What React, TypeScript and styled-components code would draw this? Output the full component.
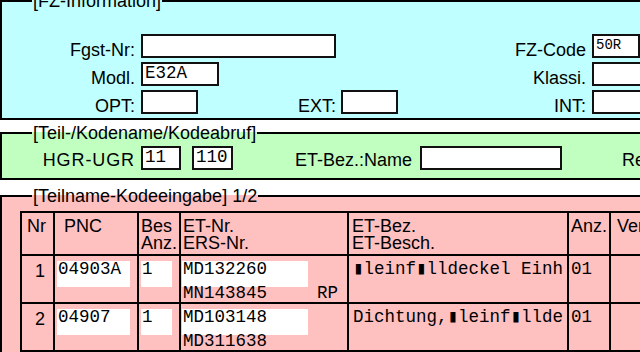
import React from 'react';
import styled, { createGlobalStyle } from 'styled-components';

const GlobalStyle = createGlobalStyle`
  html, body {
    margin: 0;
    padding: 0;
    background: #ffffff;
    overflow: hidden;
  }
  body {
    font-family: 'Liberation Sans', Arial, sans-serif;
    color: #000;
  }
`;

const Page = styled.div`
  width: 640px;
  height: 352px;
  overflow: hidden;
`;

const Inner = styled.div`
  width: 820px;
`;

const Section = styled.fieldset<{ $bg: string; $top: number }>`
  margin: ${(p) => p.$top}px 0 0 0;
  padding: 0;
  min-width: 0;
  border: 2px solid #000;
  background: ${(p) => p.$bg};
`;

const Legend = styled.legend`
  margin-left: 30px;
  padding: 0 1px;
  font-size: 18px;
  line-height: 18px;
  white-space: pre;
`;

/* FZ-Information block */
const InfoGrid = styled.div`
  display: grid;
  grid-template-columns: 139px 150px 50px 59px 192px 1fr;
  grid-auto-rows: 24px;
  row-gap: 4px;
  padding: 24px 0 4px;
`;

const Label = styled.span<{ $col: number; $pad?: number }>`
  grid-column: ${(p) => p.$col};
  align-self: end;
  justify-self: end;
  padding-right: ${(p) => p.$pad ?? 6}px;
  font-size: 18px;
  line-height: 18px;
  margin-bottom: -1px;
  white-space: nowrap;
`;

const Field = styled.div<{ $w: number; $col?: string; $size?: number }>`
  ${(p) => (p.$col ? `grid-column: ${p.$col};` : '')}
  box-sizing: border-box;
  width: ${(p) => p.$w}px;
  height: 24px;
  border: 2px solid #111;
  background: #fff;
  padding: 1px 0 0 2px;
  font-family: 'Liberation Mono', 'Courier New', monospace;
  font-size: ${(p) => p.$size ?? 17.5}px;
  line-height: 17px;
  white-space: pre;
`;

/* Teil-/Kodename block */
const CodeRow = styled.div`
  display: flex;
  align-items: flex-end;
  padding: 4px 0 8px;
`;

const RowLabel = styled.span<{ $w?: number; $ml?: number; $ls?: number }>`
  ${(p) => (p.$w ? `width: ${p.$w}px; text-align: right; padding-right: 6px; box-sizing: border-box;` : '')}
  margin-left: ${(p) => p.$ml ?? 0}px;
  letter-spacing: ${(p) => p.$ls ?? 0}px;
  font-size: 18px;
  line-height: 18px;
  margin-bottom: 1px;
  white-space: nowrap;
  flex-shrink: 0;
`;

const Spacer = styled.span<{ $w: number }>`
  width: ${(p) => p.$w}px;
  flex-shrink: 0;
`;

/* Teilname table */
const TableWrap = styled.div`
  padding: 6px 0 0 18px;
`;

const Table = styled.div`
  display: grid;
  grid-template-columns: 33px 84px 42px 168px 220px 42px 120px;
  grid-template-rows: 43px 48px 48px;
  border-left: 2px solid #000;
  border-top: 2px solid #000;
  width: max-content;
`;

const Cell = styled.div`
  border-right: 2px solid #000;
  border-bottom: 2px solid #000;
  overflow: hidden;
  white-space: pre;
`;

const HeadCell = styled(Cell)<{ $pl: number }>`
  padding: 5px 0 0 ${(p) => p.$pl}px;
  font-size: 18px;
  line-height: 17px;
`;

const NrCell = styled(Cell)`
  text-align: right;
  padding: 7px 8px 0 0;
  font-size: 18px;
  line-height: 17px;
`;

const BoxCell = styled(Cell)<{ $ml: number }>`
  padding: 5px 0 0 ${(p) => p.$ml}px;
`;

const MonoCell = styled(Cell)<{ $pl: number }>`
  padding: 5px 0 0 ${(p) => p.$pl}px;
  font-family: 'Liberation Mono', 'DejaVu Sans Mono', monospace;
  font-size: 17.5px;
  line-height: 17.5px;
`;

const Box = styled.div<{ $w: number }>`
  width: ${(p) => p.$w}px;
  height: 26px;
  background: #fff;
  padding-left: 1px;
  box-sizing: border-box;
  font-family: 'Liberation Mono', 'Courier New', monospace;
  font-size: 17.5px;
  line-height: 17.5px;
  white-space: pre;
`;

const SubLine = styled.div`
  display: flex;
  justify-content: space-between;
  padding: 0 9px 0 1px;
  margin-top: -2px;
  font-family: 'Liberation Mono', 'Courier New', monospace;
  font-size: 17.5px;
  line-height: 17.5px;
`;

type Row = { nr: string; pnc: string; bes: string; et: string; ers: string; tag: string; bez: string; anz: string };

const rows: Row[] = [
  { nr: '1', pnc: '04903A', bes: '1', et: 'MD132260', ers: 'MN143845', tag: 'RP', bez: '▮leinf▮lldeckel Einh', anz: '01' },
  { nr: '2', pnc: '04907', bes: '1', et: 'MD103148', ers: 'MD311638', tag: '', bez: 'Dichtung,▮leinf▮llde', anz: '01' },
];

const App: React.FC = () => {
  return (
    <Page>
      <GlobalStyle />
      <Inner>
        <Section $bg="#c0ffff" $top={-8}>
          <Legend>[FZ-Information]</Legend>
          <InfoGrid>
            <Label $col={1}>Fgst-Nr:</Label>
            <Field $w={195} $col="2 / span 2" />
            <Label $col={5}>FZ-Code</Label>
            <Field $w={48} $col="6" $size={14}>50R</Field>

            <Label $col={1}>Modl.</Label>
            <Field $w={78} $col="2">E32A</Field>
            <Label $col={5}>Klassi.</Label>
            <Field $w={52} $col="6" />

            <Label $col={1}>OPT:</Label>
            <Field $w={57} $col="2" />
            <Label $col={3} $pad={5}>EXT:</Label>
            <Field $w={57} $col="4" />
            <Label $col={5}>INT:</Label>
            <Field $w={52} $col="6" />
          </InfoGrid>
        </Section>

        <Section $bg="#c0ffc0" $top={4}>
          <Legend>[Teil-/Kodename/Kodeabruf]</Legend>
          <CodeRow>
            <RowLabel $w={139} $ls={0.9}>HGR-UGR</RowLabel>
            <Field $w={40}>11</Field>
            <Spacer $w={11} />
            <Field $w={41}>110</Field>
            <RowLabel $ml={62}>ET-Bez.:Name</RowLabel>
            <Spacer $w={8} />
            <Field $w={142} />
            <RowLabel $ml={60}>Rep.-Nr.</RowLabel>
          </CodeRow>
        </Section>

        <Section $bg="#ffc0c0" $top={7}>
          <Legend>[Teilname-Kodeeingabe] 1/2</Legend>
          <TableWrap>
            <Table>
              <HeadCell $pl={5}>Nr</HeadCell>
              <HeadCell $pl={9}>PNC</HeadCell>
              <HeadCell $pl={2}>{'Bes\nAnz.'}</HeadCell>
              <HeadCell $pl={2}>{'ET-Nr.\nERS-Nr.'}</HeadCell>
              <HeadCell $pl={3}>{'ET-Bez.\nET-Besch.'}</HeadCell>
              <HeadCell $pl={2}>Anz.</HeadCell>
              <HeadCell $pl={6}>Verw.</HeadCell>

              {rows.map((r) => (
                <React.Fragment key={r.nr}>
                  <NrCell>{r.nr}</NrCell>
                  <BoxCell $ml={2}>
                    <Box $w={73}>{r.pnc}</Box>
                  </BoxCell>
                  <BoxCell $ml={2}>
                    <Box $w={31}>{r.bes}</Box>
                  </BoxCell>
                  <BoxCell $ml={1}>
                    <Box $w={126}>{r.et}</Box>
                    <SubLine>
                      <span>{r.ers}</span>
                      <span>{r.tag}</span>
                    </SubLine>
                  </BoxCell>
                  <MonoCell $pl={4}>{r.bez}</MonoCell>
                  <MonoCell $pl={2}>{r.anz}</MonoCell>
                  <Cell />
                </React.Fragment>
              ))}
            </Table>
          </TableWrap>
        </Section>
      </Inner>
    </Page>
  );
};

export default App;
